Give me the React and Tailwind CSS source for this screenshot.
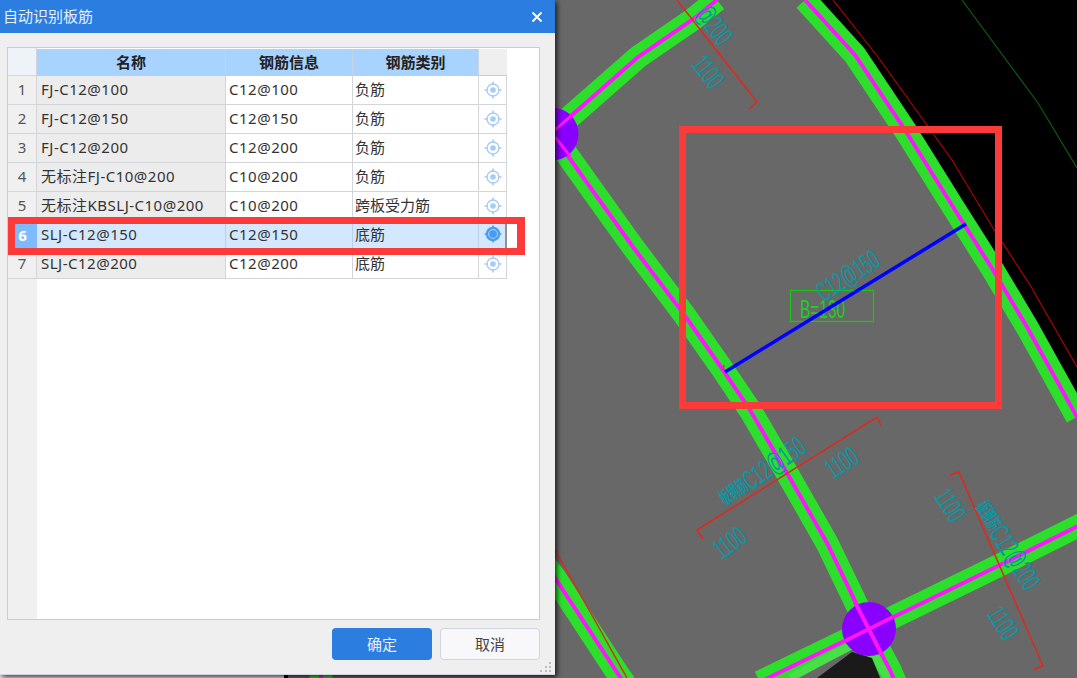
import React from 'react';

const rows = [
  ['FJ-C12@100', 'C12@100', '负筋'],
  ['FJ-C12@150', 'C12@150', '负筋'],
  ['FJ-C12@200', 'C12@200', '负筋'],
  ['无标注FJ-C10@200', 'C10@200', '负筋'],
  ['无标注KBSLJ-C10@200', 'C10@200', '跨板受力筋'],
  ['SLJ-C12@150', 'C12@150', '底筋'],
  ['SLJ-C12@200', 'C12@200', '底筋'],
];

const beams = [
  '805,0 855,55 905,130 955,210 993,270 1027,327 1077,417',
  '717,0 692,20 638,57 555,130',
  '553,135 590,187 633,247 683,313 723,370 750,410 787,473 827,543 868,628 890,670 896,684',
  '1090,520 1000,565 869,629 770,677 760,682',
  '530,545 555,578 620,677 625,684',
  '321,668 321,684',
];

const labels = [
  { x: 730, y: 543, r: -36, t: '1100' },
  { x: 842, y: 463, r: -33, t: '1100' },
  { x: 950, y: 505, r: 58, t: '1100' },
  { x: 1003, y: 623, r: 58, t: '1100' },
  { x: 708, y: 72, r: 52, t: '1100' },
  { x: 762, y: 472, r: -35, p: '板钢筋', t: 'C12@150' },
  { x: 1007, y: 545, r: 58, p: '板钢筋', t: 'C12@200' },
  { x: 714, y: 25, r: 52, t: '@200' },
  { x: 848, y: 276, r: -33, t: 'C12@150' },
];

function Drawing() {
  return (
    <svg className="absolute inset-0" width="1077" height="678" viewBox="0 0 1077 678">
      <rect width="1077" height="678" fill="#686868" />
      <rect x="0" y="670" width="284" height="8" fill="#e4e4e6" />
      <rect x="284" y="670" width="4" height="8" fill="#000" />
      <polygon points="805,0 855,55 905,130 955,210 993,270 1027,327 1077,417 1077,0" fill="#000" />
      <polyline points="833,0 878,57 952,160 993,228 1030,285 1077,367" fill="none" stroke="#b00000" strokeWidth="1.2" />
      <polyline points="962,0 1038,103 1077,168" fill="none" stroke="#0d5c0d" strokeWidth="1.2" />
      {beams.map((b) => (
        <polyline key={b} points={b} fill="none" stroke="#2bdf2b" strokeWidth="23" />
      ))}
      <polyline points="790,678 852,645 874,655 888,678" fill="none" stroke="#48e048" strokeWidth="8" />
      <polygon points="817,678 852,652 872,658 880,678" fill="#1a1a1a" />
      {beams.map((b) => (
        <polyline key={b + 'm'} points={b} fill="none" stroke="#ff14ff" strokeWidth="4" />
      ))}
      <circle cx="552" cy="134" r="26.5" fill="#8a00ff" />
      <circle cx="869" cy="629" r="27" fill="#8a00ff" />
      <line x1="555" y1="130" x2="578" y2="110" stroke="#ff14ff" strokeWidth="3" />
      <line x1="555" y1="137" x2="570" y2="156" stroke="#ff14ff" strokeWidth="3" />
      <line x1="855" y1="602" x2="882" y2="655" stroke="#ff14ff" strokeWidth="4" />
      <line x1="845" y1="641" x2="893" y2="617" stroke="#ff14ff" strokeWidth="4" />
      <polyline points="881,426 877,417 697,530 703,539" fill="none" stroke="#e0281c" strokeWidth="1.5" />
      <polyline points="950,475 959,472 1043,666 1034,669" fill="none" stroke="#e0281c" strokeWidth="1.5" />
      <polyline points="677,0 757,102 749,109" fill="none" stroke="#e0281c" strokeWidth="1.5" />
      <polyline points="555,550 593,617 627,678" fill="none" stroke="#e0281c" strokeWidth="1.5" />
      <rect x="790.5" y="290.5" width="83" height="31" fill="none" stroke="#14c814" strokeWidth="1.3" />
      <text transform="translate(800 318) scale(0.62 1)" fontSize="25" fill="#22cc22" fontFamily="'Liberation Sans', sans-serif">
        B=130
      </text>
      {labels.map((l) => (
        <text
          key={l.x}
          transform={`translate(${l.x} ${l.y}) rotate(${l.r}) scale(0.55 1)`}
          textAnchor="middle"
          dominantBaseline="central"
          fontSize="28"
          fill="#0c95a2"
          fontFamily="'Liberation Sans', 'Noto Sans CJK SC', sans-serif"
        >
          {l.p && (
            <tspan fontSize="18" fontWeight="700">
              {l.p}
            </tspan>
          )}
          {l.t}
        </text>
      ))}
      <line x1="723" y1="370" x2="724" y2="365" stroke="#b4511c" strokeWidth="1.5" />
      <line x1="725" y1="372" x2="966" y2="224" stroke="#0000ff" strokeWidth="3.5" />
    </svg>
  );
}

function Target({ active }) {
  const color = active ? '#4a9cf0' : '#a6cbf7';
  return (
    <svg width="18" height="18" viewBox="0 0 18 18" fill="none">
      <circle cx="9" cy="9" r="6" stroke={color} strokeWidth={active ? 2.5 : 1.3} />
      <circle cx="9" cy="9" r={active ? 4 : 2.8} fill={color} />
      <path d="M9 0.5v3.5M9 14v3.5M0.5 9h3.5M14 9h3.5" stroke={color} strokeWidth="1.6" />
    </svg>
  );
}

function Grip() {
  return (
    <div className="absolute right-[3px] bottom-[2px] grid grid-cols-3 gap-[2px] w-[12px]">
      {[0, 0, 1, 0, 1, 1, 1, 1, 1].map((on, i) => (
        <span key={i} className={on ? 'w-[2px] h-[2px] bg-[#bdbdbd]' : 'w-[2px] h-[2px]'} />
      ))}
    </div>
  );
}

function Table() {
  return (
    <div className="flex h-[573px] w-[533px] border border-[#c9cdd3] bg-white">
      <div className="w-[29px] bg-[#f0f0f0] text-[#555]">
        <div className="h-[28px] border-b border-r border-[#d2d5da] bg-[#eef3f9]" />
        {rows.map((r, i) => (
          <div
            key={r[0]}
            className={
              i === 5
                ? 'flex h-[29px] items-center justify-center bg-[#7fbaff] pb-px font-bold text-white'
                : 'flex h-[29px] items-center justify-center border-b border-r border-[#d2d5da] pb-px'
            }
          >
            {i + 1}
          </div>
        ))}
      </div>
      <div className="w-[470px]">
        <div className="grid h-[28px] grid-cols-[189px_127px_126px_28px] border-b border-[#c9cdd3] pt-px font-semibold text-[#222]">
          <div className="flex items-center justify-center border-r border-[#c6d3e2] bg-[#a9d3ff]">名称</div>
          <div className="flex items-center justify-center border-r border-[#c6d3e2] bg-[#a9d3ff]">钢筋信息</div>
          <div className="flex items-center justify-center border-r border-[#c6d3e2] bg-[#a9d3ff]">钢筋类别</div>
          <div className="bg-[#efefef]" />
        </div>
        {rows.map((r, i) => {
          const sel = i === 5;
          return (
            <div
              key={r[0]}
              className={
                sel
                  ? 'grid h-[29px] grid-cols-[189px_127px_126px_28px] border-b-2 border-r-2 border-[#8f9499] bg-[#d3e8fe] text-[#333]'
                  : 'grid h-[29px] grid-cols-[189px_127px_126px_28px] border-b border-[#d2d5da] text-[#333]'
              }
            >
              <div className={sel ? 'flex items-center border-r border-[#bcd0e4] pb-px pl-1 tracking-[0.5px]' : 'flex items-center border-r border-[#d2d5da] bg-[#ececec] pb-px pl-1 tracking-[0.5px]'}>{r[0]}</div>
              <div className={sel ? 'flex items-center border-r border-[#bcd0e4] pb-px pl-[3px] tracking-[0.5px]' : 'flex items-center border-r border-[#d2d5da] pb-px pl-[3px] tracking-[0.5px]'}>{r[1]}</div>
              <div className={sel ? 'flex items-center border-r border-[#bcd0e4] pb-px pl-[2px]' : 'flex items-center border-r border-[#d2d5da] pb-px pl-[2px]'}>{r[2]}</div>
              <div className={sel ? 'flex items-center justify-center pb-px' : 'flex items-center justify-center border-r border-[#d2d5da] pb-px'}>
                <Target active={sel} />
              </div>
            </div>
          );
        })}
      </div>
    </div>
  );
}

export default function App() {
  return (
    <div className="relative h-[678px] w-[1077px] overflow-hidden font-['Noto_Sans','Noto_Sans_CJK_SC',sans-serif] text-[15px]">
      <Drawing />
      <div className="relative flex h-[675px] w-[555px] flex-col border-b border-[#cdd5e0] bg-[#efefef] shadow-[2px_2px_5px_rgba(0,0,0,0.75)]">
        <div className="flex h-[33px] items-center justify-between bg-[#2b7de0] pl-[3px] pr-[12px] text-[#e6f0fc]">
          <span>自动识别板筋</span>
          <svg width="12" height="12" viewBox="0 0 12 12" fill="none">
            <path d="M1.5 1.5l9 9M10.5 1.5l-9 9" stroke="#fff" strokeWidth="1.8" />
          </svg>
        </div>
        <div className="px-[7px] pt-[14px]">
          <Table />
        </div>
        <div className="flex justify-end gap-2 pr-[15px] pt-2">
          <button className="h-[32px] w-[100px] rounded bg-[#2b7de0] text-[#e8f1fc]">确定</button>
          <button className="h-[32px] w-[100px] rounded border border-[#ced6e2] bg-[#f8f8fa] text-[#444]">取消</button>
        </div>
        <Grip />
        <div className="absolute left-[8px] top-[217px] h-[38px] w-[517px] border-y-[7px] border-l-[7px] border-r-[8px] border-[#fd3a3a]" />
      </div>
      <div className="absolute left-[679px] top-[126px] h-[283px] w-[323px] border-[7px] border-[#fd3a3a]" />
    </div>
  );
}
